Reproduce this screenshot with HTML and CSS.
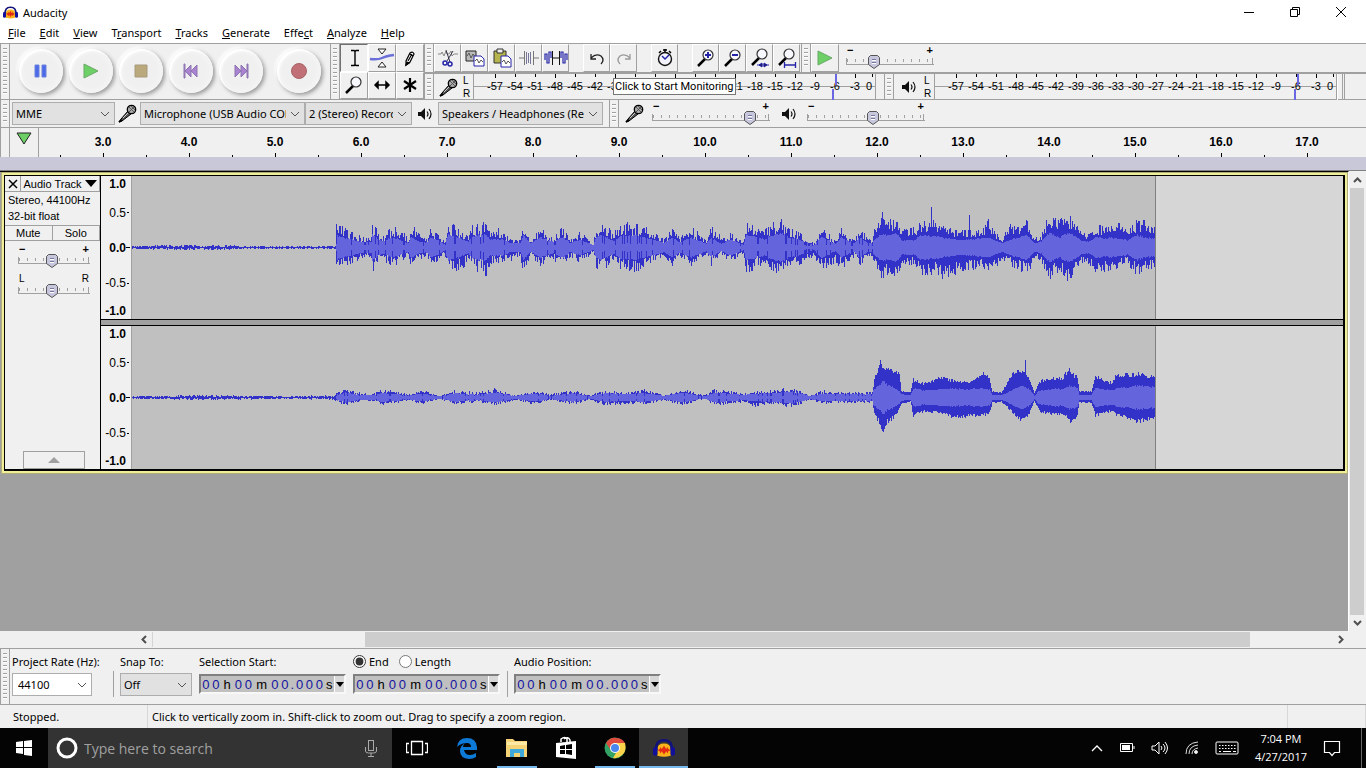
FILE: index.html
```
<!DOCTYPE html>
<html lang="en">
<head>
    <meta charset="utf-8">
    <title>Audacity</title>
    <link rel="stylesheet" href="styles.css">
</head>
<body>
    <svg class="defs" aria-hidden="true">
        <symbol id="mic" viewBox="0 0 19 19">
            <path d="M1 18l2-3 7-8 3 3-9 7z" fill="#555" stroke="#000"/>
            <path d="M1 18l3-2" stroke="#000" stroke-width="2"/>
            <circle cx="13.500" cy="5.500" r="4.200" fill="#aaa" stroke="#000" stroke-width="1.300"/>
            <path d="M11 3l5 5M13 2l4 4M11 8l5-5" stroke="#444" stroke-width=".8"/>
            <path d="M5 14l5-5" stroke="#ccc"/>
        </symbol>
        <symbol id="speaker" viewBox="0 0 14 14">
            <path d="M0 5h3l4-4v12l-4-4h-3z" fill="#111"/>
            <path d="M9 4.500q2 2.500 0 5M11 2q4 5 0 10" fill="none" stroke="#111" stroke-width="1.200"/>
        </symbol>
        <symbol id="glass" viewBox="0 0 20 20">
            <path d="M2 18l7-7" stroke="#000" stroke-width="2.500"/>
            <circle cx="12" cy="7" r="5" fill="#f8f8ff" stroke="#333" stroke-width="1.200"/>
        </symbol>
        <symbol id="logo" viewBox="0 0 20 20">
            <path d="M4 11q0-5 6-5t6 5v6q-6 2-12 0z" fill="#f9b21b"/>
            <path d="M4 12l2-1 1-2 1 2 2-3 2 3 1-2 1 2 2 1-2 1-1 2-1-2-2 3-2-3-1 2-1-2z" fill="#e22b12"/>
            <path d="M3 12q-1-9 7-9t7 9" fill="none" stroke="#11117d" stroke-width="2.200"/>
            <rect x="0" y="9" width="4" height="8" rx="2" fill="#10109a"/>
            <rect x="16" y="9" width="4" height="8" rx="2" fill="#10109a"/>
        </symbol>
        <symbol id="rewind" viewBox="0 0 16 16">
            <path d="M1 1h1v14h-1zM8 2v12l-6-6zM14 2v12l-6-6z" fill="#a983cf" stroke="#8d74b0"/>
        </symbol>
    </svg>

    <header class="title-bar">
        <svg class="logo"><use href="#logo"/></svg>
        <span class="title">Audacity</span>
        <button aria-label="Minimize"><svg width="12" height="12"><path d="M1 6.500h10" stroke="#000"/></svg></button>
        <button aria-label="Restore"><svg width="12" height="12" fill="none" stroke="#000"><path d="M1.500 3.500h7v7h-7zM3.500 3v-1.500h7v7h-2"/></svg></button>
        <button aria-label="Close"><svg width="12" height="12"><path d="M1 1l10 10M11 1l-10 10" stroke="#000"/></svg></button>
    </header>

    <nav class="menu">
        <a href="#"><u>F</u>ile</a>
        <a href="#"><u>E</u>dit</a>
        <a href="#"><u>V</u>iew</a>
        <a href="#">T<u>r</u>ansport</a>
        <a href="#"><u>T</u>racks</a>
        <a href="#"><u>G</u>enerate</a>
        <a href="#">Effe<u>c</u>t</a>
        <a href="#"><u>A</u>nalyze</a>
        <a href="#"><u>H</u>elp</a>
    </nav>

    <div class="toolbars">
        <div class="grip"></div>
        <div class="transport">
            <button aria-label="Pause"><svg viewBox="0 0 16 16"><path d="M2 2h4v12h-4zM9 2h4v12h-4z" fill="#4b6be8" stroke="#6c83dc"/></svg></button>
            <button aria-label="Play"><svg viewBox="0 0 16 16"><path d="M1 1v14l14-7z" fill="#6cd067" stroke="#69a866"/></svg></button>
            <button aria-label="Stop"><svg viewBox="0 0 16 16"><path d="M2 2h12v12h-12z" fill="#baa97d" stroke="#a79b7c"/></svg></button>
            <button aria-label="Skip to start"><svg viewBox="0 0 16 16"><use href="#rewind"/></svg></button>
            <button aria-label="Skip to end"><svg class="flip" viewBox="0 0 16 16"><use href="#rewind"/></svg></button>
            <button class="record" aria-label="Record"><svg viewBox="0 0 16 16"><circle cx="8" cy="8" r="7.500" fill="#c27077" stroke="#a56367"/></svg></button>
        </div>
        <div class="grip"></div>
        <div class="tools">
            <button class="pressed" aria-label="Selection tool"><svg viewBox="0 0 20 20"><path d="M7 2.500h3l1 1 1-1h3M11 3v15M7 17.500h3l1-1 1 1h3" fill="none" stroke="#000" stroke-width="1.400"/></svg></button>
            <button aria-label="Envelope tool"><svg class="wide" viewBox="0 0 26 20"><path d="M1 11q8 1 12-1t12-3" fill="none" stroke="#6a70d8" stroke-width="2.500"/><path d="M9 1h8l-4 5zM9 19h8l-4-5z" fill="#fff" stroke="#222"/></svg></button>
            <button aria-label="Draw tool"><svg viewBox="0 0 20 20"><path d="M6 17v-4l4-8q3-2 4 1l-4 8z" fill="#fff" stroke="#000" stroke-width="1.200"/><path d="M6 17l1-3 2 1zM10 6l3 2M8 13l4-7" stroke="#000" stroke-width="1.200"/></svg></button>
            <button aria-label="Zoom tool"><svg viewBox="0 0 20 20"><use href="#glass"/></svg></button>
            <button aria-label="Time shift tool"><svg viewBox="0 0 20 20"><path d="M3 10h14M6 7l-3 3 3 3zM14 7l3 3-3 3z" fill="#000" stroke="#000" stroke-width="1.500"/></svg></button>
            <button aria-label="Multi tool"><svg viewBox="0 0 20 20"><path d="M10 3v14M4 6l12 8M16 6l-12 8" stroke="#000" stroke-width="2.200"/></svg></button>
        </div>
        <div class="stack">
            <div class="row">
                <div class="grip"></div>
                <div class="edit">
                    <button aria-label="Cut"><svg viewBox="0 0 20 20" fill="none"><path d="M0 6h3l1-2 2 4 2-5 1 3h2l2-3 1 5 2-2h4" stroke="#888"/><path d="M8 2l4 12M15 3l-6 10" stroke="#334"/><circle cx="7" cy="15" r="2" stroke="#2424a8" stroke-width="1.500"/><circle cx="12" cy="16" r="2" stroke="#2424a8" stroke-width="1.500"/></svg></button>
                    <button aria-label="Copy"><svg viewBox="0 0 20 20"><path d="M1 3h10v10h-10z" fill="#bbb" stroke="#222"/><path d="M2 8l2-3 2 5 2-4 2 3" fill="none" stroke="#555"/><path d="M9 8h7l3 3v7h-10z" fill="#fff" stroke="#2424a8"/><path d="M10 13l2-2 2 4 2-3 2 2" fill="none" stroke="#555"/></svg></button>
                    <button aria-label="Paste"><svg viewBox="0 0 20 20"><path d="M2 3h12v12h-12z" fill="#b6b44c" stroke="#333"/><path d="M5 1h6v4h-6z" fill="#eee" stroke="#333"/><path d="M9 8h7l3 3v8h-10z" fill="#fff" stroke="#2424a8"/><path d="M10 14l2-2 2 4 2-3 2 2" fill="none" stroke="#555"/></svg></button>
                    <button aria-label="Trim"><svg viewBox="0 0 20 20" fill="none"><path d="M0 10h5M15 10h5M5.500 3v14M14.500 3v14" stroke="#777"/><path d="M7.500 4v12M9.500 5v10M11.500 4v12" stroke="#77779a"/></svg></button>
                    <button aria-label="Silence"><svg class="wide" viewBox="0 0 24 20" fill="none"><path d="M1 12v-6h2v9h2v-11h2v6M17 10v-6h2v11h2v-9h2v6" stroke="#2424a8" stroke-width="1.200"/><path d="M8 10h8M8.500 3v14M15.500 3v14" stroke="#111"/></svg></button>
                    <button class="apart" aria-label="Undo"><svg viewBox="0 0 20 20" fill="none"><path d="M4 6v5h5M4 10q5-5 10-2 4 4 0 8" stroke="#222" stroke-width="1.300"/></svg></button>
                    <button aria-label="Redo"><svg class="flip" viewBox="0 0 20 20" fill="none"><path d="M4 6v5h5M4 10q5-5 10-2 4 4 0 8" stroke="#999" stroke-width="1.300"/></svg></button>
                    <button class="apart" aria-label="Sync-lock"><svg viewBox="0 0 20 20"><path d="M8 2h4M10 1v3M4 5l2-2M16 5l-2-2" stroke="#000" stroke-width="1.500"/><circle cx="10" cy="11" r="6.500" fill="#f4f4ff" stroke="#111" stroke-width="1.400"/><path d="M7 8l3 3 4-4" fill="none" stroke="#2424a8" stroke-width="1.500"/></svg></button>
                    <button class="apart" aria-label="Zoom in"><svg viewBox="0 0 20 20"><use href="#glass"/><path d="M9 7h6M12 4v6" stroke="#2424a8" stroke-width="2"/></svg></button>
                    <button aria-label="Zoom out"><svg viewBox="0 0 20 20"><use href="#glass"/><path d="M9 7h6" stroke="#2424a8" stroke-width="2"/></svg></button>
                    <button aria-label="Fit selection"><svg viewBox="0 0 20 20"><use href="#glass" y="-1"/><path d="M7 17h12M12 15v4l-3-2zM14 15v4l3-2z" stroke="#2424a8"/></svg></button>
                    <button aria-label="Fit project"><svg viewBox="0 0 20 20"><use href="#glass" y="-1"/><path d="M8 17h10M7.500 14v6M18.500 14v6" stroke="#2424a8" stroke-width="1.300"/></svg></button>
                </div>
                <div class="grip"></div>
                <button class="play-speed" aria-label="Play at speed"><svg viewBox="0 0 16 16"><path d="M1 1v14l14-7z" fill="#6cd067" stroke="#69a866"/></svg></button>
                <div class="slider speed">
                    <div class="signs"><span>−</span><span>+</span></div>
                    <input type="range" value="29" aria-label="Playback speed">
                </div>
            </div>
            <div class="row">
                <div class="grip"></div>
                <svg class="mic"><use href="#mic"/></svg>
                <div class="sides"><span>L</span><span>R</span></div>
                <div class="meter" data-top="363" data-bottom="360"></div>
                <div class="grip meter-grip"></div>
                <svg class="speaker"><use href="#speaker"/></svg>
                <div class="sides"><span>L</span><span>R</span></div>
                <div class="meter" data-top="364" data-bottom="361"></div>
                <div class="row-end"></div>
                <div class="tooltip">Click to Start Monitoring</div>
            </div>
        </div>
    </div>

    <div class="device-bar">
        <div class="grip"></div>
        <select class="host" aria-label="Audio host"><option>MME</option></select>
        <svg class="mic"><use href="#mic"/></svg>
        <select class="device" aria-label="Recording device"><option>Microphone (USB Audio CODEC)</option></select>
        <select class="channels" aria-label="Recording channels"><option>2 (Stereo) Recording</option></select>
        <svg class="speaker"><use href="#speaker"/></svg>
        <select class="device" aria-label="Playback device"><option>Speakers / Headphones (Realtek)</option></select>
        <div class="grip mixer-grip"></div>
        <svg class="mic"><use href="#mic"/></svg>
        <div class="slider volume">
            <div class="signs"><span>−</span><span>+</span></div>
            <input type="range" value="87" aria-label="Recording volume">
        </div>
        <svg class="speaker"><use href="#speaker"/></svg>
        <div class="slider volume">
            <div class="signs"><span>−</span><span>+</span></div>
            <input type="range" value="57" aria-label="Playback volume">
        </div>
    </div>

    <div class="timeline">
        <div class="grip plain"></div>
        <button class="pin" aria-label="Pin play head"><svg width="16" height="14"><path d="M1 1h14l-7 11z" fill="#6cd067" stroke="#222"/></svg></button>
        <div class="seconds" id="seconds"></div>
    </div>
    <div class="band"></div>

    <main class="workspace">
        <div class="tracks">
            <section class="track">
                <div class="panel">
                    <div class="panel-head">
                        <button aria-label="Close track"><svg width="10" height="10"><path d="M1 1l8 8M9 1l-8 8" stroke="#000" stroke-width="1.500"/></svg></button>
                        <button class="name">Audio Track <svg width="12" height="7"><path d="M0 0h12l-6 7z"/></svg></button>
                    </div>
                    <p>Stereo, 44100Hz<br>32-bit float</p>
                    <div class="panel-pair">
                        <button>Mute</button>
                        <button>Solo</button>
                    </div>
                    <div class="slider small">
                        <div class="signs"><span>−</span><span>+</span></div>
                        <input type="range" value="47" aria-label="Gain">
                    </div>
                    <div class="slider small">
                        <div class="signs letters"><span>L</span><span>R</span></div>
                        <input type="range" value="47" aria-label="Pan">
                    </div>
                    <button class="collapse" aria-label="Collapse track"><svg width="12" height="6"><path d="M0 6h12l-6-6z" fill="#a0a0a0"/></svg></button>
                </div>
                <div class="channels-view">
                    <div class="channel">
                        <div class="scale"><b>1.0</b><span>0.5</span><b>0.0</b><span>-0.5</span><b>-1.0</b></div>
                        <svg class="wave" id="wave-left" viewBox="0 0 1024 143" preserveAspectRatio="none"></svg>
                        <div class="rest"></div>
                    </div>
                    <div class="channel">
                        <div class="scale"><b>1.0</b><span>0.5</span><b>0.0</b><span>-0.5</span><b>-1.0</b></div>
                        <svg class="wave" id="wave-right" viewBox="0 0 1024 143" preserveAspectRatio="none"></svg>
                        <div class="rest"></div>
                    </div>
                </div>
            </section>
        </div>
        <div class="vscroll">
            <button aria-label="Scroll up"><svg width="9" height="6"><path d="M1 5l3.500-3.500 3.500 3.500" fill="none" stroke="#505050" stroke-width="2"/></svg></button>
            <div class="thumb"></div>
            <button aria-label="Scroll down"><svg width="9" height="6"><path d="M1 1l3.500 3.500 3.500-3.500" fill="none" stroke="#505050" stroke-width="2"/></svg></button>
        </div>
    </main>
    <div class="hscroll">
        <button aria-label="Scroll left"><svg width="6" height="9"><path d="M5 1l-3.500 3.500 3.500 3.500" fill="none" stroke="#505050" stroke-width="2"/></svg></button>
        <div class="rail"><div class="thumb"></div></div>
        <button aria-label="Scroll right"><svg width="6" height="9"><path d="M1 1l3.500 3.500-3.500 3.500" fill="none" stroke="#505050" stroke-width="2"/></svg></button>
    </div>

    <div class="selection-bar">
        <div class="grip"></div>
        <div class="field rate">
            <label for="rate">Project Rate (Hz):</label>
            <select id="rate"><option>44100</option></select>
        </div>
        <div class="field snap">
            <label for="snap">Snap To:</label>
            <select id="snap"><option>Off</option></select>
        </div>
        <div class="field">
            <span>Selection Start:</span>
            <div class="time"></div>
        </div>
        <div class="field">
            <div class="radios">
                <input type="radio" name="range" id="range-end" checked><label for="range-end">End</label>
                <input type="radio" name="range" id="range-length"><label for="range-length">Length</label>
            </div>
            <div class="time"></div>
        </div>
        <div class="field position">
            <span>Audio Position:</span>
            <div class="time"></div>
        </div>
    </div>

    <footer class="status">
        <span class="state">Stopped.</span>
        <span class="hint">Click to vertically zoom in. Shift-click to zoom out. Drag to specify a zoom region.</span>
        <span class="rate-box"></span>
    </footer>

    <div class="taskbar">
        <button class="start" aria-label="Start"><svg width="18" height="18" viewBox="0 0 18 18"><path d="M1 3l7-1v6h-7zM9 2l8-1v7h-8zM1 9h7v6l-7-1zM9 9h8v8l-8-1z" fill="#fff"/></svg></button>
        <div class="search">
            <svg width="22" height="22"><circle cx="11" cy="11" r="9" fill="none" stroke="#fff" stroke-width="3"/></svg>
            <input type="text" placeholder="Type here to search" aria-label="Type here to search">
            <svg width="14" height="18" fill="none" stroke="#aaa"><rect x="4.500" y="1.500" width="5" height="10"/><path d="M1.500 8v4q0 2 3 2h5q3 0 3-2v-4M7 14v3M4 17.500h6"/></svg>
        </div>
        <button aria-label="Task view"><svg width="22" height="16" fill="none" stroke="#fff"><path d="M5.500 1.500h11v13h-11zM3 3.500h-2.500v9h2.500M19 3.500h2.500v9h-2.500" stroke-width="1.300"/></svg></button>
        <button class="edge" aria-label="Edge"><svg width="22" height="22" viewBox="0 0 22 22"><path d="M1 10q1-9 10-9 9 0 10 9v3h-13q1 5 6 5 3 0 6-2v4q-3 2-7 2-9-1-9-8 0-5 5-8-2 2-2 4h8q0-4-4-4-6 0-10 4z" fill="#0e7ad8"/></svg></button>
        <button class="open" aria-label="File Explorer"><svg width="22" height="20"><path d="M0 1h7l2 2h12v16h-21z" fill="#f5d477"/><path d="M1 4h20v3h-20z" fill="#fde9a6"/><path d="M4 19v-8h14v8h-4v-4h-6v4z" fill="#40a9dc"/></svg></button>
        <button aria-label="Store"><svg width="22" height="24"><path d="M1 7l20-2v18l-20-2z" fill="#fff"/><path d="M6 6v-3q4-3 6 0v3M9 3q4-3 6 1v2" fill="none" stroke="#fff" stroke-width="1.500"/><path d="M5 10l5-1v4h-5zM11 9l6-1v5h-6zM5 14h5v4h-5zM11 14h6v5l-6-1z" fill="#000"/></svg></button>
        <button class="open" aria-label="Chrome"><svg width="22" height="22" viewBox="0 0 22 22"><circle cx="11" cy="11" r="10.500" fill="#34a165"/><path d="M2 6q4-6 10-5 6 0 9 5h-10q-4 1-5 6z" fill="#df4b3e"/><path d="M21 6q2 8-3 12-4 4-9 3l6-10q-1-4-4-5z" fill="#fbd34b"/><circle cx="11" cy="11" r="5" fill="#fff"/><circle cx="11" cy="11" r="4" fill="#4a87ee"/></svg></button>
        <button class="open active" aria-label="Audacity"><svg width="22" height="22"><use href="#logo"/></svg></button>
        <div class="tray">
            <svg width="12" height="8"><path d="M1 7l5-5 5 5" fill="none" stroke="#fff" stroke-width="1.300"/></svg>
            <svg width="16" height="12"><path d="M1.500 1.500h12v8h-12zM15 4v3" fill="none" stroke="#fff"/><path d="M3 3h8v5h-8z" fill="#fff"/></svg>
            <svg width="18" height="14" fill="none" stroke="#fff"><path d="M1 5h3l4-4v12l-4-4h-3zM10 5q2 2 0 4M12 3q4 4 0 8M14 1q5 6 0 12"/></svg>
            <svg width="14" height="14" fill="none" stroke="#ddd"><path d="M1 13q0-11 12-12M4 13q0-8 9-9M7 13q0-5 6-6"/><circle cx="11" cy="11" r="1.500" fill="#fff"/></svg>
            <svg width="24" height="14" fill="none" stroke="#fff"><rect x="1" y="1" width="22" height="12" rx="1"/><path d="M4 4.500h17M4 7.500h17" stroke-dasharray="1.500 1.500"/><path d="M4 10.500h2M8 10.500h8M18 10.500h3"/></svg>
            <div class="clock">7:04 PM<br>4/27/2017</div>
            <svg width="18" height="18"><path d="M1.500 2.500h15v11h-5l-2.500 3-2.500-3h-5z" fill="none" stroke="#fff" stroke-width="1.200"/></svg>
        </div>
        <div class="show-desktop"></div>
    </div>

    <script src="script.js"></script>
</body>
</html>
```

FILE: styles.css
```
* {
    box-sizing: border-box;
}

body {
    margin: 0;
    height: 100vh;
    display: flex;
    flex-direction: column;
    overflow: hidden;
    background: #f0f0f0;
    color: #000;
    font-family: "Noto Sans", "Open Sans", sans-serif;
    font-size: 11px;
}

button {
    margin: 0;
    padding: 0;
    border: none;
    background: none;
    color: inherit;
    font: inherit;
    display: flex;
    align-items: center;
    justify-content: center;
}

.defs {
    display: none;
}

.flip {
    transform: scaleX(-1);
}

/* title and menu */
.title-bar {
    display: flex;
    align-items: center;
    height: 24px;
    flex: none;
    padding-left: 3px;
    background: #fff;
}

.logo {
    width: 15px;
    height: 15px;
}

.title {
    flex: 1;
    padding-left: 5px;
}

.title-bar button {
    width: 46px;
    height: 22px;
}

.title-bar button:last-child {
    margin-right: 2px;
}

.menu {
    display: flex;
    gap: 14px;
    height: 19px;
    flex: none;
    padding-left: 8px;
    line-height: 18px;
    background: #fff;
}

.menu a {
    color: #000;
    text-decoration: none;
}

/* toolbars */
.toolbars {
    display: flex;
    height: 56px;
    flex: none;
    border-top: 1px solid #a0a0a0;
}

.grip {
    width: 10px;
    flex: none;
    border-left: 1px solid #a0a0a0;
    border-right: 1px solid #a0a0a0;
    background: repeating-linear-gradient(#a0a0a0 0 1px, #fff 1px 2px, #f0f0f0 2px 4px) content-box;
    padding: 4px 2px;
}

.transport {
    display: flex;
    align-items: center;
    gap: 6px;
    width: 320px;
    flex: none;
    padding: 0 0 2px 9px;
}

.transport button {
    width: 44px;
    height: 44px;
    border-radius: 50%;
    background: radial-gradient(#f0f0f0 50%, #fafafa);
    box-shadow: 2px 2px 4px #989898, -2px -2px 3px #fff, inset 2px 2px 2px #fff;
}

.transport svg {
    width: 16px;
    height: 16px;
}

.transport .record {
    margin-left: 8px;
}

.tools {
    display: grid;
    grid-template-columns: repeat(3, 28px);
    width: 84px;
    flex: none;
}

.tools button,
.edit button,
.play-speed {
    border: 1px solid #a0a0a0;
    border-top-color: #fff;
    border-left-color: #fff;
}

.tools .pressed {
    border-color: #707070 #fff #fff #707070;
}

.tools svg {
    width: 20px;
    height: 20px;
}

.tools .wide {
    width: 26px;
}

.stack {
    flex: 1;
    min-width: 0;
}

.row {
    display: flex;
    height: 28px;
    position: relative;
    align-items: center;
}

.row + .row {
    border-top: 2px solid #a0a0a0;
}

.row .grip {
    height: 100%;
}

.edit {
    display: flex;
    height: 100%;
    width: 367px;
}

.edit button {
    width: 27px;
}

.edit svg {
    width: 20px;
    height: 20px;
}

.edit .wide {
    width: 24px;
}

.edit .apart {
    margin-left: 14px;
}

.play-speed {
    width: 28px;
    height: 100%;
}

.play-speed svg {
    width: 16px;
    height: 16px;
}

.mic {
    width: 19px;
    height: 19px;
    flex: none;
    margin: 0 5px;
}

.speaker {
    width: 14px;
    height: 14px;
    flex: none;
    margin: 0 8px;
}

.sides {
    display: flex;
    flex-direction: column;
    justify-content: space-around;
    width: 10px;
    height: 100%;
    flex: none;
    font: 10px/12px "Liberation Sans", Arial, sans-serif;
}

.meter {
    display: flex;
    position: relative;
    width: 403px;
    height: 100%;
    padding-left: 11px;
    border-left: 1px solid #a0a0a0;
    border-right: 1px solid #a0a0a0;
    background: linear-gradient(#a0a0a0, #a0a0a0) 0 12px / 100% 1px no-repeat;
    font: 11px/24px "Liberation Sans", Arial, sans-serif;
}

.meter span {
    width: 20px;
    flex: none;
    display: flex;
    justify-content: center;
    white-space: nowrap;
    background: linear-gradient(#000, #000) 50% 0 / 1px 3px no-repeat;
}

.meter span:nth-child(3n + 1) {
    background-size: 1px 4px;
}

.meter span:nth-child(20) {
    width: 8px;
    background-position: 100% 0;
}

.peak {
    position: absolute;
    width: 2px;
    height: 11px;
    background: #6b67e3;
}

.peak.top {
    top: 0;
}

.peak.bottom {
    bottom: 0;
}

.meter-grip {
    margin-left: 8px;
}

.row-end {
    width: 8px;
    height: 100%;
    border-left: 1px solid #fff;
    border-right: 3px double #a0a0a0;
}

.tooltip {
    position: absolute;
    left: 189px;
    top: 4px;
    padding: 0 1px;
    border: 1px solid #767676;
    background: #fff;
    font: 11px/15px Roboto, "Open Sans", sans-serif;
    white-space: nowrap;
}

/* sliders */
.slider {
    flex: none;
}

.signs {
    display: flex;
    justify-content: space-between;
    padding: 0 1px;
    font: bold 11px/8px "Liberation Sans", Arial, sans-serif;
}

.signs.letters {
    font-weight: normal;
    font-size: 10px;
}

.slider input {
    appearance: none;
    display: block;
    width: 100%;
    height: 16px;
    margin: 0;
    background:
        linear-gradient(#a0a0a0, #a0a0a0) 0 10px / 100% 1px no-repeat,
        repeating-linear-gradient(90deg, #a0a0a0 0 1px, transparent 1px 8px) 1px 5px / 100% 3px no-repeat,
        linear-gradient(90deg, #a0a0a0 1px, transparent 1px calc(100% - 2px), #a0a0a0 calc(100% - 2px) calc(100% - 1px), transparent 0) 0 4px / 100% 6px no-repeat;
}

.slider input::-webkit-slider-thumb {
    appearance: none;
    width: 12px;
    height: 16px;
    border: none;
    background: url("data:image/svg+xml,%3Csvg xmlns='http://www.w3.org/2000/svg' width='12' height='16'%3E%3Cpath d='M2.500 1.500h7l2 2v7l-5.500 4-5.500-4v-7z' fill='%23c6c6dc' stroke='%23555'/%3E%3Cpath d='M4 5.500h4M4 8.500h4' stroke='%2377779a'/%3E%3Cpath d='M4 6.500h4M4 9.500h4' stroke='%23fff'/%3E%3C/svg%3E");
}

.speed {
    width: 88px;
    margin-left: 7px;
}

.volume {
    width: 118px;
    margin-left: 5px;
}

.device-bar {
    display: flex;
    align-items: center;
    height: 28px;
    flex: none;
    border-top: 1px solid #a0a0a0;
}

.device-bar .grip,
.timeline .grip {
    height: 100%;
}

.device-bar .mic {
    margin: 0 3px;
}

.device-bar .speaker {
    margin: 0 6px;
}

.device-bar .mixer-grip {
    margin: 0 3px 0 6px;
}

.device-bar .volume + .speaker {
    margin: 0 6px 0 12px;
}

select {
    appearance: none;
    height: 23px;
    flex: none;
    padding: 0 18px 0 3px;
    border: 1px solid #adadad;
    border-radius: 0;
    background: #e1e1e1 url("data:image/svg+xml,%3Csvg xmlns='http://www.w3.org/2000/svg' width='10' height='6'%3E%3Cpath d='M1 1l4 4 4-4' fill='none' stroke='%23555'/%3E%3C/svg%3E") right 4px center no-repeat;
    color: #000;
    font: inherit;
}

.host {
    width: 103px;
    margin-left: 2px;
}

.device {
    width: 165px;
}

.channels {
    width: 107px;
}

/* timeline */
.timeline {
    display: flex;
    height: 30px;
    flex: none;
    border-top: 1px solid #a0a0a0;
    overflow: hidden;
}

.timeline .plain {
    background: none;
}

.pin {
    width: 29px;
    flex: none;
    align-items: flex-start;
    padding-top: 4px;
    border-right: 1px solid #a0a0a0;
}

.seconds {
    display: flex;
    padding-left: 21px;
}

.seconds div {
    width: 86px;
    flex: none;
    text-align: center;
    font: bold 12px/28px "Liberation Sans", Arial, sans-serif;
    background:
        linear-gradient(#000, #000) 43px 100% / 1px 4px no-repeat,
        linear-gradient(#000, #000) 0 100% / 1px 2px no-repeat;
}

.band {
    height: 14px;
    flex: none;
    background: #c8c8d8;
    border-bottom: 1px solid #808080;
}

/* tracks */
.workspace {
    display: flex;
    flex: 1;
    min-height: 0;
}

.tracks {
    flex: 1;
    min-width: 0;
    background: #a0a0a0;
    border-top: 1px solid #000;
    border-right: 1px solid #fff;
    padding: 3px 3px 0 4px;
}

.track {
    display: flex;
    height: 296px;
    border: 1px solid #000;
    border-width: 1px 2px 2px 1px;
    outline: 2px solid #f0ee98;
    box-shadow: 0 0 0 3px #b0ae78;
}

.panel {
    display: flex;
    flex-direction: column;
    width: 96px;
    flex: none;
    background: #f0f0f0;
    border-right: 1px solid #000;
    font: 11px/16px "Liberation Sans", Arial, sans-serif;
}

.panel p {
    margin: 0;
    padding: 0 3px 1px;
}

.panel-head,
.panel-pair {
    display: flex;
}

.panel-head button {
    width: 16px;
    height: 16px;
    border-right: 1px solid #a0a0a0;
    border-bottom: 1px solid #a0a0a0;
}

.panel-head .name {
    flex: 1;
    gap: 3px;
    white-space: nowrap;
}

.panel-pair button {
    flex: 1;
    height: 16px;
    border: 1px solid #a0a0a0;
    border-width: 1px 1px 1px 0;
}

.small {
    width: 72px;
    margin: 4px 0 2px 13px;
}

.collapse {
    width: 62px;
    height: 18px;
    margin: auto 0 0 18px;
    border: 1px solid #a0a0a0;
}

.channels-view {
    display: flex;
    flex-direction: column;
    flex: 1;
    min-width: 0;
    gap: 5px;
    background: #a0a0a0;
}

.channel {
    display: flex;
    flex: 1;
    min-height: 0;
}

.channel:first-child {
    border-bottom: 1px solid #000;
}

.channel + .channel {
    border-top: 1px solid #000;
}

.scale {
    display: grid;
    grid-template-rows: 18px 1fr 1fr 1fr 18px;
    align-items: center;
    width: 31px;
    flex: none;
    padding: 1px 5px 1px 0;
    border-right: 1px solid #a0a0a0;
    background:
        linear-gradient(#000, #000) right 2px top 36px / 2px 1px no-repeat,
        linear-gradient(#000, #000) right 1px top 71px / 4px 1px no-repeat,
        linear-gradient(#000, #000) right 2px top 107px / 2px 1px no-repeat,
        #f0f0f0;
    font: 12px/14px "Liberation Sans", Arial, sans-serif;
    text-align: right;
}

.scale b:first-child {
    align-self: start;
}

.scale b:last-child {
    align-self: end;
}

.wave {
    width: 1024px;
    height: 100%;
    flex: none;
    background: #c0c0c0;
    border-right: 1px solid #808080;
    shape-rendering: crispEdges;
}

.rest {
    flex: 1;
    background: #d6d6d6;
}

/* scroll bars */
.vscroll {
    display: flex;
    flex-direction: column;
    width: 17px;
    padding: 1px 1px 0 0;
}

.vscroll button {
    height: 16px;
}

.vscroll .thumb {
    flex: 1;
    margin: 0 1px;
    background: #cdcdcd;
}

.hscroll {
    display: flex;
    height: 17px;
    flex: none;
    padding: 1px 17px 1px 136px;
}

.hscroll button {
    width: 16px;
}

.rail {
    flex: 1;
    border-left: 1px solid #d4d4d4;
}

.rail .thumb {
    width: 75%;
    height: 100%;
    margin-left: 18%;
    background: #cdcdcd;
}

/* selection bar */
.selection-bar {
    display: flex;
    height: 57px;
    flex: none;
    border-top: 1px solid #a0a0a0;
    border-bottom: 1px solid #a0a0a0;
}

.field {
    display: flex;
    flex-direction: column;
    gap: 3px;
    margin-right: 7px;
    padding-top: 4px;
    line-height: 17px;
}

.rate {
    width: 101px;
    margin: 0 0 0 2px;
    white-space: nowrap;
}

.rate select {
    width: 80px;
    padding-left: 5px;
    background-color: #fff;
}

.snap {
    padding-left: 7px;
}

.snap select {
    width: 72px;
}

.field.snap,
.position {
    background: linear-gradient(#a0a0a0, #a0a0a0) 0 22px / 1px 26px no-repeat;
}

.position {
    padding-left: 7px;
}

.radios {
    display: flex;
    align-items: center;
    height: 17px;
}

.radios input {
    width: 13px;
    height: 13px;
    margin: 0 3px 0 0;
    accent-color: #333;
}

.radios label {
    margin-right: 10px;
}

.time {
    display: flex;
    width: 147px;
    height: 20px;
    margin-top: 1px;
    border: 2px solid #808080;
    border-right-color: #f8f8f8;
    border-bottom-color: #f8f8f8;
    background: #c0c0c0;
    font: 13px/17px "Liberation Sans", Arial, sans-serif;
    text-align: center;
}

.time span {
    width: 10px;
}

.time .digit {
    color: #1414a0;
}

.time .h {
    width: 13px;
}

.time .m {
    width: 17px;
}

.time .dot {
    width: 5px;
}

.time button {
    width: 10px;
    margin-left: auto;
    background: #d8d8d8;
    border-left: 1px solid #fff;
}

.status {
    display: flex;
    height: 23px;
    flex: none;
    line-height: 24px;
}

.state {
    width: 148px;
    padding-left: 13px;
    border-right: 1px solid #d7d7d7;
}

.hint {
    flex: 1;
    padding-left: 4px;
    border-right: 1px solid #d7d7d7;
}

.rate-box {
    width: 78px;
    border-right: 1px solid #d7d7d7;
}

/* taskbar */
.taskbar {
    display: flex;
    height: 40px;
    flex: none;
    background: #040404;
    color: #fff;
}

.taskbar > button {
    width: 49px;
}

.taskbar .start {
    width: 48px;
}

.search {
    display: flex;
    align-items: center;
    width: 344px;
    padding: 0 14px 0 8px;
    background: #333;
}

.search input {
    flex: 1;
    min-width: 0;
    padding: 0 6px;
    border: none;
    background: none;
    color: #fff;
    font: 14px "Open Sans", "Noto Sans", sans-serif;
}

.search input::placeholder {
    color: #a0a0a0;
}

.taskbar .edge {
    width: 51px;
}

.taskbar .open {
    background: linear-gradient(#76b9ed, #76b9ed) center bottom / 40px 2px no-repeat;
}

.taskbar .active {
    background-color: #333;
    background-size: 100% 2px;
}

.tray {
    display: flex;
    align-items: center;
    gap: 16px;
    margin-left: auto;
    padding-right: 20px;
}

.clock {
    font-family: "Open Sans", "Noto Sans", sans-serif;
    text-align: center;
    line-height: 18px;
}

.show-desktop {
    width: 5px;
    border-left: 1px solid #666;
}
```

FILE: script.js
```
// envelope points: x, peak above centre, peak below centre
var left = [
    [0, 1, 1], [30, 2, 2], [60, 2, 2], [100, 2, 2], [110, 1, 1], [203, 1, 1],
    [204, 22, 20], [216, 15, 15], [230, 9, 9], [239, 10, 9], [240, 22, 23], [246, 15, 13],
    [250, 10, 12], [259, 18, 17], [268, 18, 13], [276, 7, 7], [279, 21, 18], [286, 13, 10],
    [295, 8, 8], [298, 16, 17], [308, 10, 10], [312, 5, 6], [316, 22, 22], [326, 18, 24],
    [336, 9, 11], [339, 20, 17], [353, 23, 27], [358, 13, 15], [368, 18, 14], [378, 7, 12],
    [388, 6, 8], [391, 22, 23], [398, 7, 8], [408, 17, 17], [421, 9, 11], [430, 18, 17],
    [438, 7, 8], [448, 14, 13], [461, 3, 5], [464, 20, 18], [469, 23, 22], [481, 14, 11],
    [488, 22, 19], [503, 22, 22], [518, 17, 15], [533, 7, 8], [541, 19, 17], [548, 8, 8],
    [560, 18, 17], [575, 7, 6], [580, 20, 16], [590, 9, 6], [599, 14, 13], [612, 4, 5],
    [615, 22, 24], [633, 14, 14], [638, 23, 20], [651, 25, 24], [658, 19, 16], [668, 13, 15],
    [683, 4, 8], [690, 18, 20], [704, 6, 14], [710, 17, 20], [723, 6, 8], [729, 19, 18],
    [736, 8, 7], [741, 6, 8], [743, 20, 15], [750, 32, 28], [758, 25, 25], [765, 29, 29],
    [771, 15, 15], [783, 18, 15], [789, 24, 24], [806, 24, 24], [813, 19, 28], [823, 16, 24],
    [833, 15, 20], [848, 18, 19], [857, 24, 20], [863, 15, 20], [871, 8, 10], [878, 22, 15],
    [886, 20, 20], [896, 25, 25], [903, 8, 10], [910, 12, 12], [918, 31, 31], [928, 25, 20],
    [937, 30, 30], [945, 24, 22], [950, 13, 15], [958, 12, 15], [965, 21, 25], [973, 18, 22],
    [987, 24, 18], [996, 14, 15], [1006, 26, 26], [1013, 24, 20], [1023, 20, 19]
];

var right = [
    [0, 1, 1], [50, 2, 2], [95, 2, 2], [150, 1, 1], [200, 2, 2], [213, 8, 8], [230, 4, 3],
    [240, 3, 3], [249, 8, 7], [265, 6, 5], [277, 3, 3], [290, 7, 6], [308, 1, 1], [323, 7, 7],
    [345, 5, 4], [363, 9, 8], [383, 2, 2], [403, 6, 7], [418, 3, 2], [440, 7, 7], [458, 2, 2],
    [473, 7, 8], [498, 5, 6], [513, 9, 7], [533, 2, 2], [551, 8, 8], [573, 2, 1], [583, 8, 8],
    [613, 4, 4], [623, 6, 9], [638, 7, 6], [663, 10, 10], [678, 2, 2], [693, 7, 6], [703, 5, 5],
    [741, 5, 5], [743, 20, 18], [749, 35, 28], [751, 35, 36], [756, 29, 26], [763, 27, 20],
    [768, 25, 12], [770, 6, 6], [779, 5, 4], [782, 19, 19], [793, 14, 14], [808, 20, 16],
    [823, 18, 21], [838, 16, 19], [853, 26, 18], [858, 19, 16], [861, 6, 5], [870, 5, 4],
    [878, 19, 12], [882, 27, 18], [890, 27, 23], [897, 23, 19], [903, 4, 3], [908, 17, 14],
    [923, 20, 18], [931, 19, 17], [934, 25, 20], [938, 28, 25], [946, 21, 20], [948, 6, 5],
    [960, 6, 5], [964, 22, 19], [973, 18, 16], [981, 15, 14], [985, 24, 19], [1003, 24, 23],
    [1008, 25, 26], [1023, 22, 21]
];

var seed = 7;

function random() {
    seed = (seed * 16807) % 2147483647;
    return seed / 2147483647;
}

function drawWave(id, points, spikes, gain, rough) {
    var peaks = "";
    var rms = "";
    var i = 0;
    for (var x = 0; x < 1024; x++) {
        while (i < points.length - 2 && points[i + 1][0] <= x) i++;
        var a = points[i];
        var b = points[i + 1];
        var t = (x - a[0]) / (b[0] - a[0]);
        var up = a[1] + (b[1] - a[1]) * t;
        var down = a[2] + (b[2] - a[2]) * t;
        var loud = x > 742;
        var quiet = x < 204;
        var wobble = loud ? rough : quiet ? 1 : 0.6;
        var inner = Math.min(up, down) * (loud ? 0.5 : 0.6) * (0.85 + random() * 0.15);
        if (!loud && random() < 0.12) inner *= 0.3;
        if (!quiet) {
            up *= gain;
            down *= gain;
        }
        up = Math.round(up * (1 - wobble * random()));
        down = Math.round(down * (1 - wobble * random()));
        if (spikes[x]) up = spikes[x];
        peaks += "M" + x + " " + (71 - up) + "v" + (up + down + 1) + "h1v-" + (up + down + 1) + "z";
        inner = Math.round(inner);
        if (!quiet && inner > 0) {
            rms += "M" + x + " " + (71 - inner) + "v" + (2 * inner + 1) + "h1v-" + (2 * inner + 1) + "z";
        }
    }
    document.getElementById(id).innerHTML =
        '<path fill="#3232c8" d="' + peaks + '"/><path fill="#6464dc" d="' + rms + '"/>';
}

drawWave("wave-left", left, { 240: 22, 800: 40, 838: 32, 857: 28 }, 1.15, 0.5);
drawWave("wave-right", right, { 749: 37, 894: 37, 938: 29 }, 1.02, 0.2);

document.querySelectorAll(".meter").forEach(function (meter) {
    for (var db = -57; db <= 0; db += 3) {
        var label = document.createElement("span");
        label.textContent = db;
        meter.appendChild(label);
    }
    ["top", "bottom"].forEach(function (side) {
        var peak = document.createElement("div");
        peak.className = "peak " + side;
        peak.style.left = meter.dataset[side] / 403 * 100 + "%";
        meter.appendChild(peak);
    });
});

for (var s = 3; s <= 17; s++) {
    var second = document.createElement("div");
    second.textContent = s.toFixed(1);
    document.getElementById("seconds").appendChild(second);
}

document.querySelectorAll(".time").forEach(function (box) {
    "00h00m00.000s".split("").forEach(function (c) {
        var cell = document.createElement("span");
        cell.className = c === "0" ? "digit" : c === "." ? "digit dot" : c;
        cell.textContent = c;
        box.appendChild(cell);
    });
    box.insertAdjacentHTML("beforeend",
        '<button aria-label="Time format"><svg width="8" height="5"><path d="M0 0h8l-4 5z"/></svg></button>');
});
```
